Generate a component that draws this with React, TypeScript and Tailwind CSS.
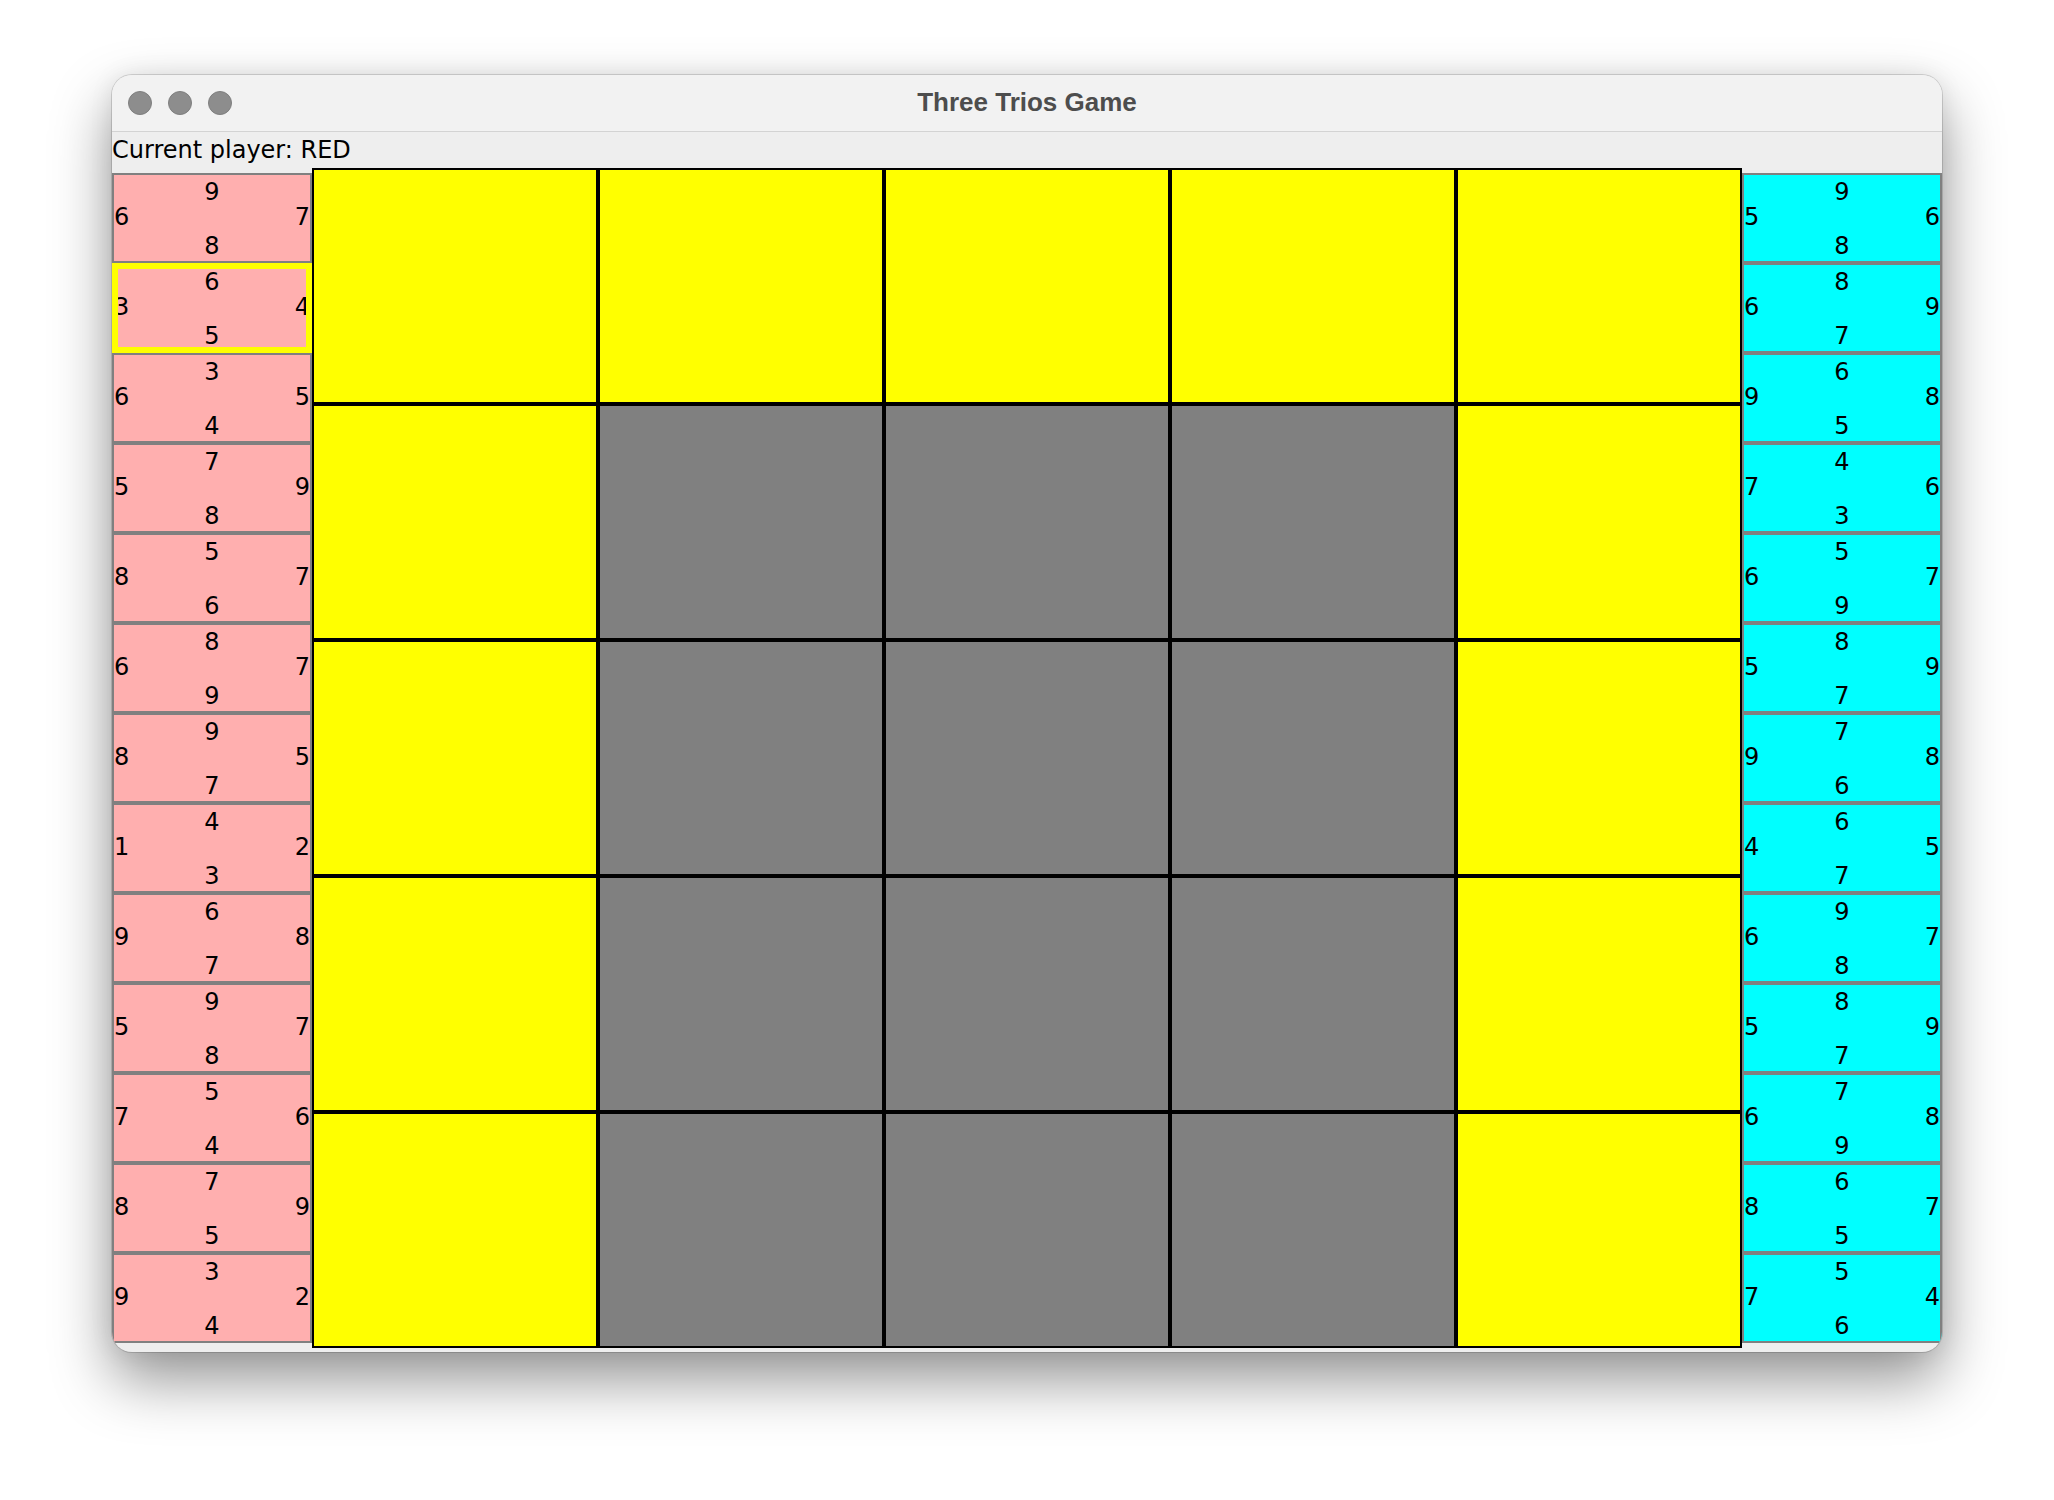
import React from "react";

interface Card {
  id: number;
  north: number;
  west: number;
  east: number;
  south: number;
}

// hands, read top to bottom: north, west, east, south
const redHand: Card[] = [
  [9, 6, 7, 8],
  [6, 3, 4, 5],
  [3, 6, 5, 4],
  [7, 5, 9, 8],
  [5, 8, 7, 6],
  [8, 6, 7, 9],
  [9, 8, 5, 7],
  [4, 1, 2, 3],
  [6, 9, 8, 7],
  [9, 5, 7, 8],
  [5, 7, 6, 4],
  [7, 8, 9, 5],
  [3, 9, 2, 4],
].map(([north, west, east, south], i) => ({ id: i, north, west, east, south }));

const blueHand: Card[] = [
  [9, 5, 6, 8],
  [8, 6, 9, 7],
  [6, 9, 8, 5],
  [4, 7, 6, 3],
  [5, 6, 7, 9],
  [8, 5, 9, 7],
  [7, 9, 8, 6],
  [6, 4, 5, 7],
  [9, 6, 7, 8],
  [8, 5, 9, 7],
  [7, 6, 8, 9],
  [6, 8, 7, 5],
  [5, 7, 4, 6],
].map(([north, west, east, south], i) => ({ id: i, north, west, east, south }));

// true = hole (gray), false = playable cell (yellow)
const board: boolean[][] = [
  [false, false, false, false, false],
  [false, true, true, true, false],
  [false, true, true, true, false],
  [false, true, true, true, false],
  [false, true, true, true, false],
];

const HandCard: React.FC<{ card: Card; player: "red" | "blue"; selected?: boolean }> = ({
  card,
  player,
  selected,
}) => {
  return (
    <div
      className={`relative h-[90px] shrink-0 border-2 flex flex-col pt-[7px] text-[24px] text-black ${
        player === "red" ? "bg-[#ffafaf]" : "bg-[#00ffff]"
      } ${selected ? "border-[#ffff00]" : "border-[#808080]"}`}
    >
      <div className="h-5 leading-5 text-center">{card.north}</div>
      <div className="h-5 leading-5 mt-[5px] flex justify-between">
        <span>{card.west}</span>
        <span>{card.east}</span>
      </div>
      <div className="h-5 leading-5 mt-[9px] text-center">{card.south}</div>
      {/* selection frame is drawn over the numbers, like the swing border */}
      {selected && <div className="absolute inset-0 border-4 border-[#ffff00]" />}
    </div>
  );
};

const Hand: React.FC<{ cards: Card[]; player: "red" | "blue"; selectedId?: number }> = ({
  cards,
  player,
  selectedId,
}) => (
  <div className="w-[200px] flex flex-col justify-center">
    {cards.map((c) => (
      <HandCard key={c.id} card={c} player={player} selected={c.id === selectedId} />
    ))}
  </div>
);

const App: React.FC = () => {
  return (
    <div
      className="min-h-[1500px] w-[2054px] bg-white pt-[75px] pl-[112px]"
      style={{ fontFamily: '"DejaVu Sans", sans-serif' }}
    >
      <div className="w-[1830px] h-[1277px] rounded-[20px] overflow-hidden bg-[#eeeeee] shadow-[0_0_0_1px_rgba(0,0,0,0.14),0_28px_60px_rgba(0,0,0,0.42),0_0_24px_rgba(0,0,0,0.08)] flex flex-col">
        {/* title bar */}
        <div className="h-[57px] shrink-0 bg-[#f2f2f2] border-b border-[#d3d3d3] grid grid-cols-[1fr_auto_1fr] items-center">
          <div className="flex items-center gap-4 pl-4">
            <span className="w-6 h-6 rounded-full bg-[#8d8d8d] border border-[#7f7f7f]" />
            <span className="w-6 h-6 rounded-full bg-[#8d8d8d] border border-[#7f7f7f]" />
            <span className="w-6 h-6 rounded-full bg-[#8d8d8d] border border-[#7f7f7f]" />
          </div>
          <div
            className="text-[26px] font-bold text-[#4d4d4d] -mt-[2px]"
            style={{ fontFamily: '"Liberation Sans", Arial, sans-serif' }}
          >
            Three Trios Game
          </div>
          <div />
        </div>

        <div className="h-[36px] shrink-0 leading-[36px] text-[24px] text-black">Current player: RED</div>

        <div className="h-[1180px] shrink-0 flex">
          <Hand cards={redHand} player="red" selectedId={1} />
          <div className="w-[1430px] h-[1180px] grid grid-cols-5 grid-rows-5">
            {board.map((row, r) =>
              row.map((hole, c) => (
                <div
                  key={`${r}-${c}`}
                  className={`border-2 border-black ${hole ? "bg-[#808080]" : "bg-[#ffff00]"}`}
                />
              ))
            )}
          </div>
          <Hand cards={blueHand} player="blue" />
        </div>
      </div>
    </div>
  );
};

export default App;
